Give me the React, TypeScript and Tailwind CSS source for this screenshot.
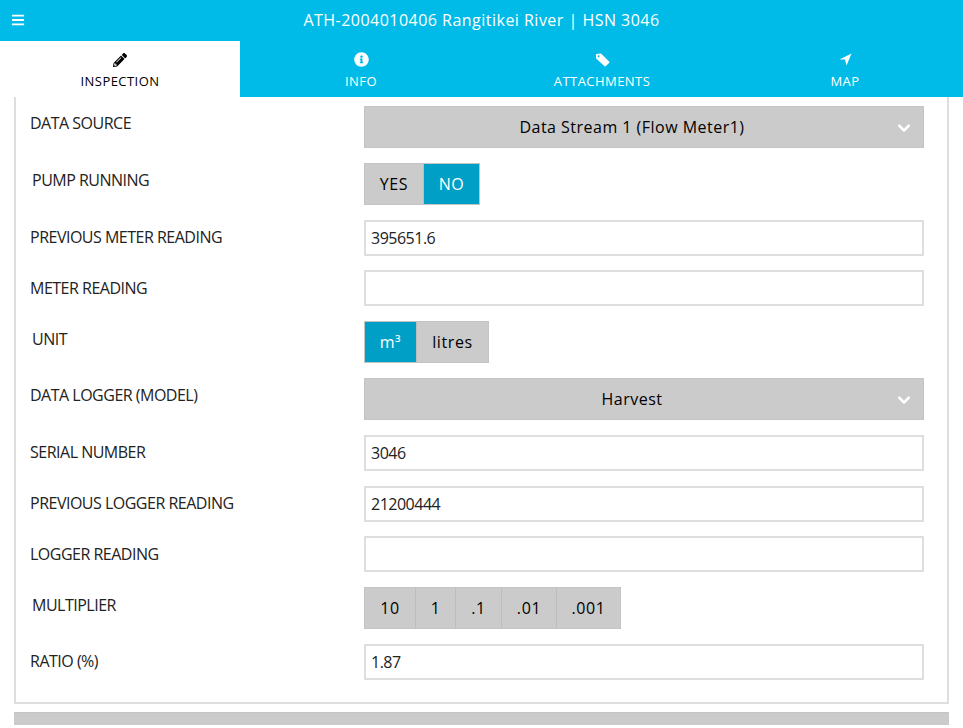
import { FaBars, FaInfoCircle, FaPencilAlt } from 'react-icons/fa';

const tabs = [
  { label: 'INSPECTION', icon: <FaPencilAlt size={14} />, width: 'w-[240px]', active: true },
  { label: 'INFO', icon: <FaInfoCircle size={15} />, width: 'w-[242px]', active: false },
  {
    label: 'ATTACHMENTS',
    icon: (
      <svg width="15" height="14" viewBox="0 0 15 14" fill="currentColor">
        <path fillRule="evenodd" d="M1.5 1 L5.5 0.5 Q6 0.5 6.5 1 L14.3 8.7 Q14.8 9.2 14.3 9.7 L10.6 13.2 Q10.1 13.6 9.6 13.2 L1.6 6 Q1 5.5 1 5 V1.5 Q1 1 1.5 1 Z M3.6 2.2 A1 1 0 1 0 3.6 4.2 A1 1 0 1 0 3.6 2.2 Z" />
      </svg>
    ),
    width: 'w-[240px]',
    active: false,
  },
  {
    label: 'MAP',
    icon: (
      <svg width="13" height="13" viewBox="0 0 13 13" fill="currentColor">
        <polygon points="12.5,0.5 0.5,6.5 6,6.5 7.5,12.5" />
      </svg>
    ),
    width: 'w-[246px]',
    active: false,
  },
];

function Row({ label, indent, low, gap = 'mb-[15px]', children }: { label: string; indent?: boolean; low?: boolean; gap?: string; children: React.ReactNode }) {
  return (
    <div className={`flex ${gap}`}>
      <div className={`w-[334px] shrink-0 text-base leading-5 tracking-[-0.5px] text-[#222] ${low ? 'pt-[8px]' : 'pt-[7px]'} ${indent ? 'pl-[2px]' : ''}`}>{label}</div>
      <div className="flex-1">{children}</div>
    </div>
  );
}

function Select({ value }: { value: string }) {
  return (
    <div className="relative h-[42px] w-[560px] border border-[#c4c4c4] bg-[#cbcbcb] pr-[24px] text-center text-base font-medium leading-[40px] tracking-[0.48px] text-black">
      {value}
      <svg width="14" height="10" viewBox="0 0 14 10" fill="none" stroke="white" strokeWidth="2.6" className="absolute right-[12px] top-[16px]">
        <path d="M1.5 2 L7 7.5 L12.5 2" />
      </svg>
    </div>
  );
}

function Field({ value }: { value: string }) {
  return (
    <div className="h-[36px] w-[560px] border-2 border-[#dedede] bg-white px-[5px] text-base leading-[33px] tracking-[-0.5px] text-[#222]">{value}</div>
  );
}

function Segments({ items, active }: { items: { text: string; width: string }[]; active?: string }) {
  return (
    <div className="flex h-[42px] w-fit border border-[#c4c4c4]">
      {items.map(item => (
        <div
          key={item.text}
          className={`${item.width} border-r border-[#bdbdbd] text-center text-base font-medium leading-[40px] tracking-[0.6px] last:border-r-0 ${item.text === active ? 'bg-[#009fc6] text-white' : 'bg-[#cbcbcb] text-black'}`}
        >
          {item.text}
        </div>
      ))}
    </div>
  );
}

export default function App() {
  return (
    <div className="h-[728px] overflow-hidden bg-white font-['Open_Sans',sans-serif]">
      {/* Header */}
      <header className="relative h-[41px] bg-[#00bbe7] text-center text-base font-normal leading-[41px] tracking-[0.48px] text-white">
        <FaBars size={14} className="absolute left-[11px] top-[13px]" />
        ATH-2004010406 Rangitikei River | HSN 3046
      </header>

      {/* Tabs */}
      <nav className="flex h-[56px] bg-[#00bbe7]">
        {tabs.map(tab => (
          <div key={tab.label} className={`${tab.width} flex shrink-0 flex-col items-center pt-[11px] ${tab.active ? 'bg-white text-black' : 'text-white'}`}>
            <div className="flex h-[15px] items-center">{tab.icon}</div>
            <span className="mt-[4px] text-[13px] font-medium leading-[20px] tracking-[0.45px]">{tab.label}</span>
          </div>
        ))}
      </nav>

      <main className="px-[14px]">
        {/* Form panel */}
        <div className="h-[607px] border-x-2 border-b-2 border-[#dedede] pl-[14px] pt-[9px]">
          <Row label="DATA SOURCE"><Select value="Data Stream 1 (Flow Meter1)" /></Row>
          <Row label="PUMP RUNNING" indent>
            <Segments active="NO" items={[{ text: 'YES', width: 'w-[59px]' }, { text: 'NO', width: 'w-[55px]' }]} />
          </Row>
          <Row label="PREVIOUS METER READING" gap="mb-[14px]"><Field value="395651.6" /></Row>
          <Row label="METER READING" low><Field value="" /></Row>
          <Row label="UNIT" indent low>
            <Segments active="m³" items={[{ text: 'm³', width: 'w-[52px]' }, { text: 'litres', width: 'w-[71px]' }]} />
          </Row>
          <Row label="DATA LOGGER (MODEL)"><Select value="Harvest" /></Row>
          <Row label="SERIAL NUMBER"><Field value="3046" /></Row>
          <Row label="PREVIOUS LOGGER READING" gap="mb-[14px]"><Field value="21200444" /></Row>
          <Row label="LOGGER READING" low><Field value="" /></Row>
          <Row label="MULTIPLIER" indent low>
            <Segments
              items={[
                { text: '10', width: 'w-[51px]' },
                { text: '1', width: 'w-[40px]' },
                { text: '.1', width: 'w-[46px]' },
                { text: '.01', width: 'w-[55px]' },
                { text: '.001', width: 'w-[63px]' },
              ]}
            />
          </Row>
          <Row label="RATIO (%)"><Field value="1.87" /></Row>
        </div>

        {/* Next section button, cut off by the window */}
        <div className="mt-[8px] h-[13px] border-t border-[#c4c4c4] bg-[#cbcbcb]" />
      </main>
    </div>
  );
}
